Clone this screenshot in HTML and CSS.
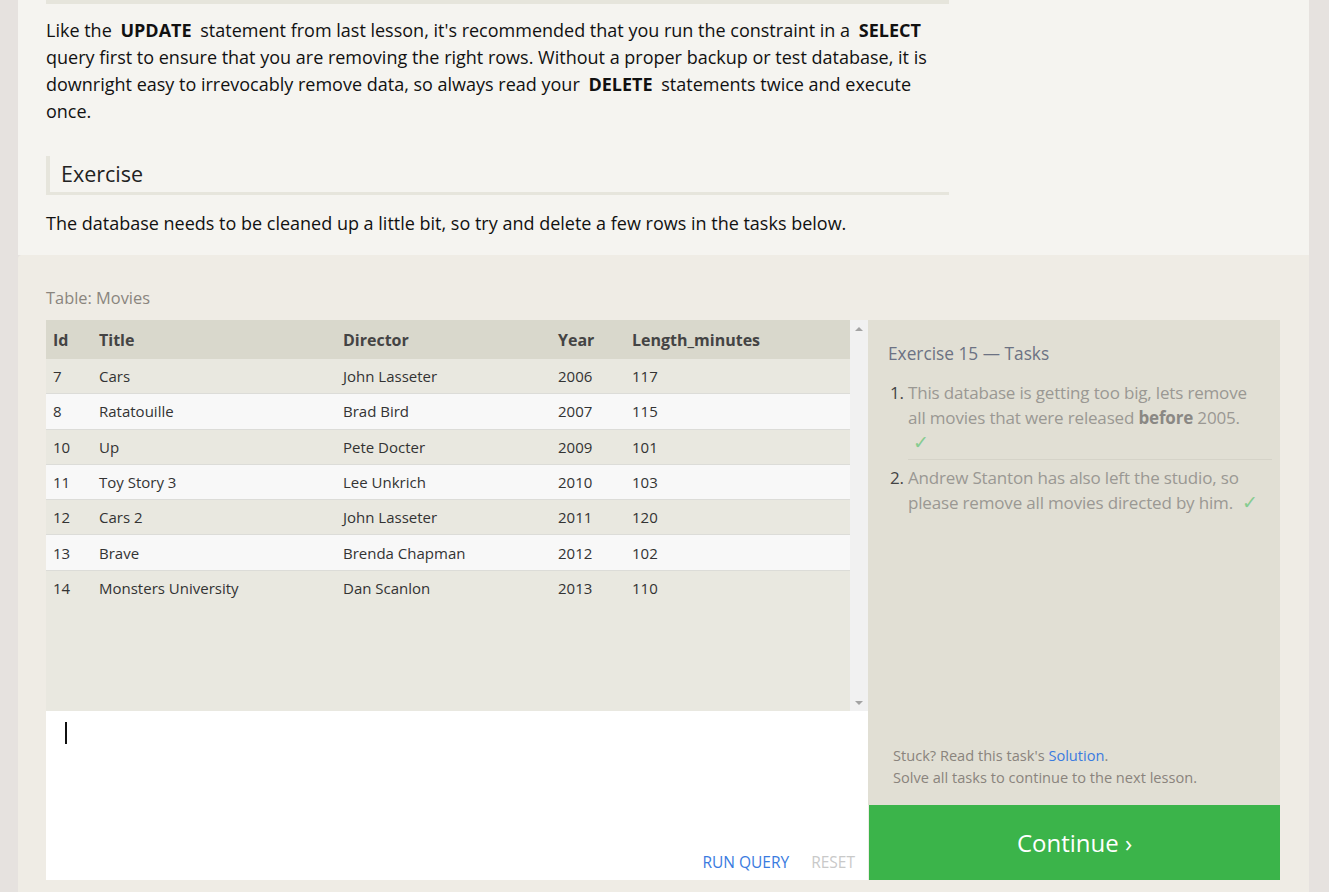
FILE: index.html
```html
<!DOCTYPE html>
<html>
<head>
<meta charset="utf-8">
<link rel="stylesheet" href="styles.css">
</head>
<body>
<div class="page">
  <div class="lesson">
    <div class="prev-rule"></div>
    <p class="text">Like the <code>UPDATE</code> statement from last lesson, it's recommended that you run the constraint in a <code>SELECT</code> query first to ensure that you are removing the right rows. Without a proper backup or test database, it is downright easy to irrevocably remove data, so always read your <code>DELETE</code> statements twice and execute once.</p>
    <h3 class="exercise-head">Exercise</h3>
    <p class="text intro">The database needs to be cleaned up a little bit, so try and delete a few rows in the tasks below.</p>
  </div>
  <div class="exercise">
    <div class="table-label">Table: Movies</div>
    <div class="ex-grid">
      <div class="left">
        <div class="table-area">
          <div class="table-scroll">
            <table class="movies">
              <colgroup><col class="c-id"><col class="c-title"><col class="c-dir"><col class="c-year"><col class="c-len"></colgroup>
              <thead><tr><th>Id</th><th>Title</th><th>Director</th><th>Year</th><th>Length_minutes</th></tr></thead>
              <tbody>
                <tr><td>7</td><td>Cars</td><td>John Lasseter</td><td>2006</td><td>117</td></tr>
                <tr><td>8</td><td>Ratatouille</td><td>Brad Bird</td><td>2007</td><td>115</td></tr>
                <tr><td>10</td><td>Up</td><td>Pete Docter</td><td>2009</td><td>101</td></tr>
                <tr><td>11</td><td>Toy Story 3</td><td>Lee Unkrich</td><td>2010</td><td>103</td></tr>
                <tr><td>12</td><td>Cars 2</td><td>John Lasseter</td><td>2011</td><td>120</td></tr>
                <tr><td>13</td><td>Brave</td><td>Brenda Chapman</td><td>2012</td><td>102</td></tr>
                <tr><td>14</td><td>Monsters University</td><td>Dan Scanlon</td><td>2013</td><td>110</td></tr>
              </tbody>
            </table>
          </div>
          <div class="scrollbar">
            <span class="arrow up"></span>
            <span class="arrow down"></span>
          </div>
        </div>
        <div class="editor">
          <div class="cursor"></div>
          <div class="editor-actions">
            <span class="run">RUN QUERY</span>
            <span class="reset">RESET</span>
          </div>
        </div>
      </div>
      <div class="right">
        <div class="tasks">
          <div class="tasks-title">Exercise 15 — Tasks</div>
          <ol class="task-list">
            <li>This database is getting too big, lets remove all movies that were released <b>before</b> 2005. <span class="check">✓</span></li>
            <li>Andrew Stanton has also left the studio, so please remove all movies directed by him. <span class="check">✓</span></li>
          </ol>
          <div class="stuck">
            Stuck? Read this task's <a class="sol">Solution</a>.<br>
            Solve all tasks to continue to the next lesson.
          </div>
        </div>
        <div class="continue">Continue ›</div>
      </div>
    </div>
  </div>
</div>
</body>
</html>
```
FILE: styles.css
```css
html, body {
  margin: 0;
  padding: 0;
}
body {
  background: #e6e2df;
  font-family: "Open Sans", "Noto Sans", sans-serif;
  color: #111;
  height: 892px;
  overflow: hidden;
}
.page {
  margin-left: 18px;
  width: 1291px;
}
.lesson {
  background: #f5f4f0;
  padding: 0 28px 18px 28px;
}
.prev-rule {
  width: 903px;
  height: 4px;
  background: #e6e5dc;
}
.text {
  margin: 13px 0 0 0;
  width: 903px;
  font-size: 18px;
  line-height: 27px;
  color: #111;
}
.text code {
  font-family: inherit;
  font-weight: 700;
  padding: 0 4px;
}
.exercise-head {
  margin: 31px 0 0 0;
  width: 888px;
  border-left: 4px solid #e6e5dc;
  border-bottom: 3px solid #e6e5dc;
  padding: 0 0 0 11px;
  height: 36px;
  line-height: 36px;
  font-size: 21.5px;
  font-weight: 400;
  color: #222;
}
.intro {
  margin-top: 15px;
}
.exercise {
  background: #efece5;
  padding: 32px 29px 40px 28px;
  border-top-left-radius: 4px;
}
.table-label {
  font-size: 16.4px;
  line-height: 22px;
  color: #8a857e;
  margin-bottom: 11px;
}
.ex-grid {
  display: grid;
  grid-template-columns: 822px 412px;
}
.left {
  display: flex;
  flex-direction: column;
}
.table-area {
  display: flex;
  height: 391px;
  background: #e9e8e0;
}
.table-scroll {
  width: 804px;
}
.scrollbar {
  width: 18px;
  background: #f1f1f1;
  display: flex;
  flex-direction: column;
  justify-content: space-between;
  align-items: center;
  padding: 7px 0 6px;
  box-sizing: border-box;
}
.arrow {
  width: 0;
  height: 0;
  border-left: 4px solid transparent;
  border-right: 4px solid transparent;
}
.arrow.up { border-bottom: 4px solid #a3a3a3; }
.arrow.down { border-top: 4px solid #a3a3a3; }
.movies {
  width: 804px;
  border-collapse: collapse;
  table-layout: fixed;
  font-size: 15px;
  color: #333;
}
.c-id { width: 46px; }
.c-title { width: 244px; }
.c-dir { width: 215px; }
.c-year { width: 74px; }
.movies th {
  background: #d9d8cc;
  text-align: left;
  font-weight: 700;
  font-size: 16px;
  color: #444;
  height: 39px;
  padding: 0 0 0 7px;
}
.movies td {
  height: 34.3px;
  padding: 0 0 0 7px;
  border-bottom: 1px solid #dcdcd8;
}
.movies tbody tr:nth-child(odd) td { background: #e9e8e0; }
.movies tbody tr:nth-child(even) td { background: #f8f8f8; }
.movies tbody tr:last-child td { border-bottom: none; }
.editor {
  height: 169px;
  background: #fff;
  display: flex;
  flex-direction: column;
  justify-content: space-between;
}
.cursor {
  margin: 11px 0 0 19px;
  width: 2px;
  height: 22px;
  background: #111;
}
.editor-actions {
  display: flex;
  justify-content: flex-end;
  gap: 22px;
  padding: 0 13px 7px 0;
  font-size: 15.5px;
  line-height: 22px;
}
.run { color: #3a7be0; }
.reset { color: #c9c9c9; }
.right {
  display: flex;
  flex-direction: column;
}
.tasks {
  height: 485px;
  background: #e1dfd4;
  padding: 22px 8px 0 20px;
  box-sizing: border-box;
  display: flex;
  flex-direction: column;
}
.tasks-title {
  font-size: 17.3px;
  line-height: 24px;
  color: #6c7283;
}
.task-list {
  margin: 14px 0 0 0;
  padding: 0 0 0 20px;
  font-size: 17px;
  letter-spacing: -0.17px;
  line-height: 25px;
  color: #9a9893;
}
.task-list li {
  padding: 0 12px 4px 0;
}
.task-list li + li {
  border-top: 1px solid #d5d3c8;
  padding-top: 5px;
}
.task-list li::marker {
  color: #444;
}
.task-list b {
  color: #8a8884;
}
.check {
  color: #86cc90;
  font-size: 19px;
  line-height: 20px;
  margin-left: 5px;
}
.stuck {
  margin-top: auto;
  padding: 0 0 17px 5px;
  font-size: 14.6px;
  line-height: 22px;
  color: #8a847d;
}
.sol { color: #3a7be0; }
.continue {
  height: 75px;
  background: #3bb44a;
  color: #fff;
  font-size: 24px;
  display: flex;
  align-items: center;
  justify-content: center;
  margin-left: 1px;
}
```
